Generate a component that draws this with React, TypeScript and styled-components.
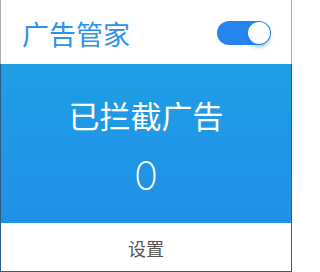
import React, { useState } from 'react';
import styled, { createGlobalStyle } from 'styled-components';

const colors = {
  brand: '#2a93ec',
  bandTop: '#1e9ee5',
  bandBottom: '#2190e8',
  toggle: '#2585ec',
  frameGray: '#a9adb1',
  frameBlue: '#2c5d88',
  text: '#555555',
  white: '#ffffff',
};

const GlobalStyle = createGlobalStyle`
  html, body {
    margin: 0;
    padding: 0;
    background: ${colors.white};
  }
  body {
    font-family: "Noto Sans CJK SC", "Noto Sans", sans-serif;
  }
`;

const Panel = styled.div`
  width: 292px;
  height: 272px;
  display: flex;
  flex-direction: column;
  box-sizing: border-box;
`;

const Header = styled.header`
  height: 64px;
  display: flex;
  align-items: center;
  justify-content: space-between;
  padding: 0 20px 0 21px;
  box-sizing: border-box;
  border-left: 1px solid ${colors.frameGray};
  border-right: 1px solid ${colors.frameGray};
`;

const Title = styled.h1`
  margin: 0;
  font-size: 27px;
  font-weight: 400;
  color: ${colors.brand};
  line-height: 1;
  margin-top: 2px;
`;

const Track = styled.button<{ $on: boolean }>`
  position: relative;
  width: 54px;
  height: 24px;
  border: none;
  padding: 0;
  border-radius: 12px;
  background: ${p => (p.$on ? colors.toggle : '#c9ccd1')};
  cursor: pointer;
  margin-top: 2px;
`;

const Knob = styled.span<{ $on: boolean }>`
  position: absolute;
  top: 1px;
  left: ${p => (p.$on ? '31px' : '1px')};
  width: 22px;
  height: 22px;
  border-radius: 50%;
  background: radial-gradient(circle at 50% 40%, #ffffff 55%, #e6eefb 100%);
  box-shadow: 0 3px 4px rgba(30, 110, 220, 0.45);
`;

const Band = styled.section`
  flex: 0 0 159px;
  display: flex;
  flex-direction: column;
  align-items: center;
  background: linear-gradient(${colors.bandTop}, ${colors.bandBottom});
  color: ${colors.white};
  border-left: 1px solid ${colors.frameBlue};
  border-right: 1px solid ${colors.frameBlue};
`;

const BandTitle = styled.div`
  margin-top: 33px;
  font-size: 31px;
  line-height: 36px;
  font-weight: 400;
`;

const Count = styled.div`
  margin-top: 20px;
  font-family: Lato, Inter, "Open Sans", sans-serif;
  font-size: 41px;
  line-height: 44px;
  font-weight: 300;
  transform: scaleX(0.9);
`;

const Footer = styled.footer`
  flex: 1;
  display: flex;
  align-items: center;
  justify-content: center;
  border-left: 1px solid ${colors.frameBlue};
  border-right: 1px solid ${colors.frameBlue};
  border-bottom: 1px solid ${colors.frameBlue};
`;

const SettingsLink = styled.span`
  font-size: 18px;
  color: ${colors.text};
  cursor: pointer;
  margin-top: 1px;
`;

const App: React.FC = () => {
  const [enabled, setEnabled] = useState(true);
  const blocked = 0;

  return (
    <>
      <GlobalStyle />
      <Panel>
        <Header>
          <Title>广告管家</Title>
          <Track $on={enabled} onClick={() => setEnabled(v => !v)} aria-label="toggle">
            <Knob $on={enabled} />
          </Track>
        </Header>
        <Band>
          <BandTitle>已拦截广告</BandTitle>
          <Count>{blocked}</Count>
        </Band>
        <Footer>
          <SettingsLink>设置</SettingsLink>
        </Footer>
      </Panel>
    </>
  );
};

export default App;
